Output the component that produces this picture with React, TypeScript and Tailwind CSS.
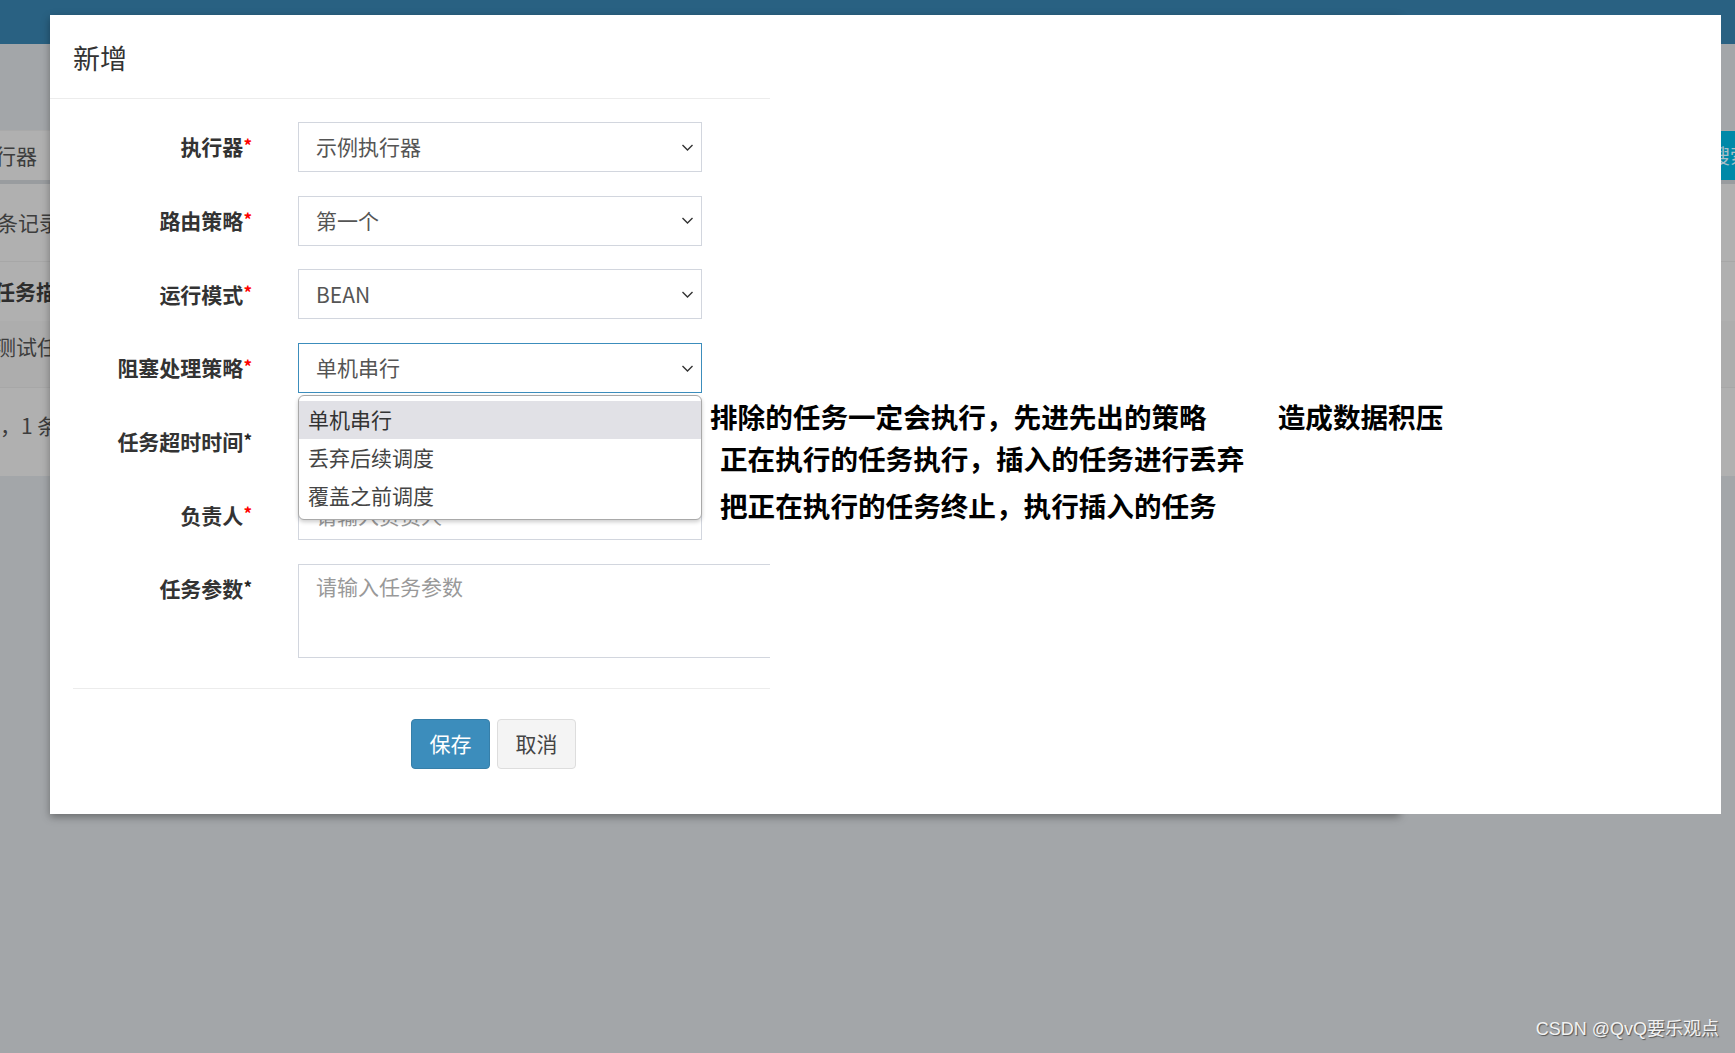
import React from "react";

const FONT = { fontFamily: '"Noto Sans CJK SC", "Noto Sans", sans-serif' };

function Chevron() {
  return (
    <svg width="13" height="9" viewBox="0 0 13 9" className="shrink-0">
      <path d="M1.5 2 L6.5 7 L11.5 2" stroke="#333" strokeWidth="1.4" fill="none" />
    </svg>
  );
}

function Label({ text, red = true }: { text: string; red?: boolean }) {
  return (
    <div className="w-[179px] shrink-0 h-[50px] flex items-center justify-end font-bold text-[21px] text-[#333] whitespace-nowrap">
      <span>{text}</span>
      <span className={red ? "text-[#ff0000] text-[17px] self-start mt-[10px]" : "text-[#222] text-[17px] self-start mt-[10px]"}>*</span>
    </div>
  );
}

function Select({ value, focused = false, children }: { value: string; focused?: boolean; children?: React.ReactNode }) {
  return (
    <div className="relative w-[404px] shrink-0">
      <div
        className={
          "h-[50px] bg-white border flex items-center justify-between pl-[17px] pr-[7px] text-[21px] text-[#555] " +
          (focused ? "border-[#3c8dbc]" : "border-[#d2d6de]")
        }
      >
        <span>{value}</span>
        <Chevron />
      </div>
      {children}
    </div>
  );
}

function Row({ children }: { children: React.ReactNode }) {
  return <div className="flex items-start gap-[46px]">{children}</div>;
}

export default function App() {
  return (
    <div className="relative w-full h-[1053px] overflow-hidden bg-[#a3a6a9]" style={FONT}>
      {/* underlying page */}
      <div className="h-[44px] bg-[#296182]" />
      <div className="mt-[86px] h-[50px] flex bg-[#b0b0b0] border-t border-[#a9a9a9]">
        <div className="w-[50px] overflow-hidden flex items-center justify-end pr-[13px] text-[21px] text-[#3d3d3d] whitespace-nowrap">
          <span>执行器</span>
        </div>
        <div className="flex-1" />
        <div className="w-[55px] bg-[#0089a8] flex items-center pl-[30px] overflow-hidden whitespace-nowrap text-[20px] text-[#a9bfc9]">
          搜索
        </div>
      </div>
      <div className="h-[4px] bg-[#999c9f]" />
      <div className="h-[292px] bg-[#b0b0b0] flex flex-col text-[21px] text-[#3d3d3d]">
        <div className="h-[77px] flex items-center">
          <div className="w-[50px] overflow-hidden whitespace-nowrap">
            <span className="-ml-[3px] inline-block">条记录</span>
          </div>
        </div>
        <div className="h-[60px] border-t border-[#a7a7a7] flex items-center">
          <div className="w-[50px] overflow-hidden whitespace-nowrap font-bold text-[#2e2e2e]">
            <span className="-ml-[6px] inline-block">任务描述</span>
          </div>
        </div>
        <div className="h-[66px] bg-[#adadad] flex items-start pt-[10px]">
          <div className="w-[50px] overflow-hidden whitespace-nowrap">
            <span className="-ml-[5px] inline-block">测试任务</span>
          </div>
        </div>
        <div className="flex-1 border-t border-[#a7a7a7] flex items-start pt-[22px]">
          <div className="w-[50px] overflow-hidden whitespace-nowrap">
            <span className="inline-block">，1 条</span>
          </div>
        </div>
      </div>

      {/* modal */}
      <div className="absolute left-[50px] top-[15px] w-[1671px] h-[799px]">
        <div className="absolute left-0 top-0 bottom-0 w-[1350px] shadow-[0_3px_8px_rgba(0,0,0,0.35)]" />
        <div className="relative w-full h-full bg-white flex">
          <div className="w-[720px] shrink-0 overflow-hidden flex flex-col">
            <div className="h-[84px] border-b border-[#ececec] px-[23px] pt-[24px]">
              <div className="text-[27px] leading-[38px] text-[#333]">新增</div>
            </div>
            <div className="pl-[23px] pt-[23px] pb-[30px] flex flex-col gap-[23.7px]">
              <Row>
                <Label text="执行器" />
                <Select value="示例执行器" />
              </Row>
              <Row>
                <Label text="路由策略" />
                <Select value="第一个" />
              </Row>
              <Row>
                <Label text="运行模式" />
                <Select value="BEAN" />
              </Row>
              <Row>
                <Label text="阻塞处理策略" />
                <Select value="单机串行" focused>
                  <div className="absolute z-10 left-0 right-0 top-[52px] bg-white border border-[#a9a9a9] rounded-[6px] shadow-[0_2px_4px_rgba(0,0,0,0.2)] pt-[5px] pb-[4px] text-[21px] text-[#333]">
                    <div className="h-[38px] flex items-center px-[9px] bg-[#e1e1e6]">单机串行</div>
                    <div className="h-[38px] flex items-center px-[9px] text-[#444]">丢弃后续调度</div>
                    <div className="h-[38px] flex items-center px-[9px] text-[#444]">覆盖之前调度</div>
                  </div>
                </Select>
              </Row>
              <Row>
                <Label text="任务超时时间" red={false} />
                <div className="w-[404px] shrink-0 h-[50px] border border-[#d2d6de] flex items-center pl-[17px] text-[21px] text-[#999]">
                  请输入任务超时时间
                </div>
              </Row>
              <Row>
                <Label text="负责人" />
                <div className="w-[404px] shrink-0 h-[50px] border border-[#d2d6de] flex items-center pl-[17px] text-[21px] text-[#999]">
                  请输入负责人
                </div>
              </Row>
              <Row>
                <Label text="任务参数" red={false} />
                <div className="w-[520px] h-[94px] shrink-0 border border-[#d2d6de] pl-[17px] pt-[6px] text-[21px] leading-[30px] text-[#999]">
                  请输入任务参数
                </div>
              </Row>
            </div>
            <div className="ml-[23px] border-t border-[#ececec] pt-[30px] pl-[338px] flex gap-[7px]">
              <button className="w-[79px] h-[50px] rounded-[4px] bg-[#3c8dbc] border border-[#367fa9] text-white text-[21px]">
                保存
              </button>
              <button className="w-[79px] h-[50px] rounded-[4px] bg-[#f4f4f4] border border-[#dddddd] text-[#444] text-[21px]">
                取消
              </button>
            </div>
          </div>

          {/* annotations */}
          <div className="absolute left-[660px] top-[381px] font-bold text-[27.6px] leading-[40px] text-black whitespace-nowrap">
            <div className="flex">
              <span>排除的任务一定会执行，先进先出的策略</span>
              <span className="ml-[71px]">造成数据积压</span>
            </div>
            <div className="ml-[10px] mt-[2px]">正在执行的任务执行，插入的任务进行丢弃</div>
            <div className="ml-[10px] mt-[7px]">把正在执行的任务终止，执行插入的任务</div>
          </div>
        </div>
      </div>

      {/* watermark */}
      <div
        className="absolute right-[16px] bottom-[10px] text-[18px] text-[#f2f2f2] [text-shadow:1px_1px_1px_#555]"
        style={{ fontFamily: '"Liberation Sans", "Noto Sans CJK SC", sans-serif' }}
      >
        CSDN @QvQ要乐观点
      </div>
    </div>
  );
}
